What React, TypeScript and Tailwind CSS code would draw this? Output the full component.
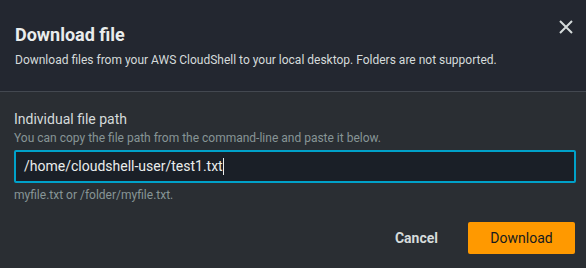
import React from "react";

export default function App() {
  return (
    <div className="w-[586px] h-[268px] bg-[#2a2e33] flex flex-col overflow-hidden" style={{ fontFamily: "Roboto, 'Liberation Sans', sans-serif" }}>
      <div className="h-[92px] bg-[#232730] border-b border-[#434850] pl-[15px] pr-[13px] pt-[23px] flex justify-between">
        <div>
          <div className="text-[18px] leading-[24px] font-bold text-[#eaeded]">Download file</div>
          <div className="text-[12px] leading-[16px] mt-[5px] text-[#d5dbdb]">Download files from your AWS CloudShell to your local desktop. Folders are not supported.</div>
        </div>
        <svg width="14" height="14" viewBox="0 0 14 14" className="mt-[-3px]" fill="none" stroke="#d5dbdb" strokeWidth="2">
          <path d="M1 1 L13 13 M13 1 L1 13" />
        </svg>
      </div>
      <div className="px-[14px] pt-[17px]">
        <div className="text-[14px] leading-[20px] text-[#d5dbdb]">Individual file path</div>
        <div className="text-[12px] leading-[16px] text-[#879596] mt-[1px]">You can copy the file path from the command-line and paste it below.</div>
        <div className="mt-[4px] h-[33px] w-[562px] rounded-[2px] border-2 border-[#00a1c9] bg-[#1a1f27] flex items-center pl-[8px]">
          <span className="text-[14px] text-[#eaeded]">/home/cloudshell-user/test1.txt</span>
          <span className="w-px h-[17px] bg-[#eaeded]"></span>
        </div>
        <div className="text-[12px] leading-[16px] text-[#879596] mt-[4px]">myfile.txt or /folder/myfile.txt.</div>
        <div className="flex justify-end items-center mt-[19px] mr-[-3px]">
          <span className="text-[14px] font-bold text-[#d5dbdb] mr-[30px]">Cancel</span>
          <div className="w-[107px] h-[32px] rounded-[2px] bg-[#ff9900] flex items-center justify-center text-[14px] text-[#16191f]">Download</div>
        </div>
      </div>
    </div>
  );
}
